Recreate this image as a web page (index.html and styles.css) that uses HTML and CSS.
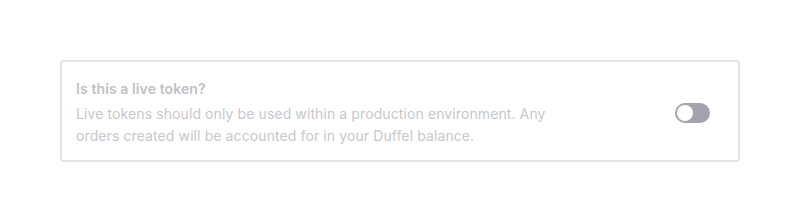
FILE: index.html
```html
<!DOCTYPE html>
<html lang="en">
<head>
  <meta charset="UTF-8" />
  <title>Live token</title>
  <link rel="stylesheet" href="styles.css">
</head>
<body>
  <div class="card">
    <div class="text">
      <div class="title">Is this a live token?</div>
      <p class="desc">Live tokens should only be used within a production environment. Any orders created will be accounted for in your Duffel balance.</p>
    </div>
    <label class="toggle">
      <span class="knob"></span>
    </label>
  </div>
</body>
</html>
```

FILE: styles.css
```css
* {
  box-sizing: border-box;
}

body {
  margin: 0;
  padding: 60px;
  background: #fff;
  font-family: Inter, 'Noto Sans', sans-serif;
}

.card {
  display: flex;
  align-items: center;
  justify-content: space-between;
  border: 2px solid #e4e4e8;
  border-radius: 4px;
  padding: 17px 28px 13px 14px;
}

.title {
  font-size: 14px;
  font-weight: 600;
  line-height: 20px;
  letter-spacing: 0.1px;
  color: #c1c0c8;
  margin-bottom: 4px;
}

.desc {
  margin: 0;
  max-width: 486px;
  font-size: 14px;
  line-height: 22px;
  letter-spacing: 0.1px;
  color: #c8c7ce;
}

.toggle {
  width: 35px;
  height: 20px;
  border-radius: 10px;
  background: #a3a2ad;
  display: flex;
  align-items: center;
  padding: 0 2px;
}

.knob {
  width: 16px;
  height: 16px;
  border-radius: 50%;
  background: #fff;
}
```
